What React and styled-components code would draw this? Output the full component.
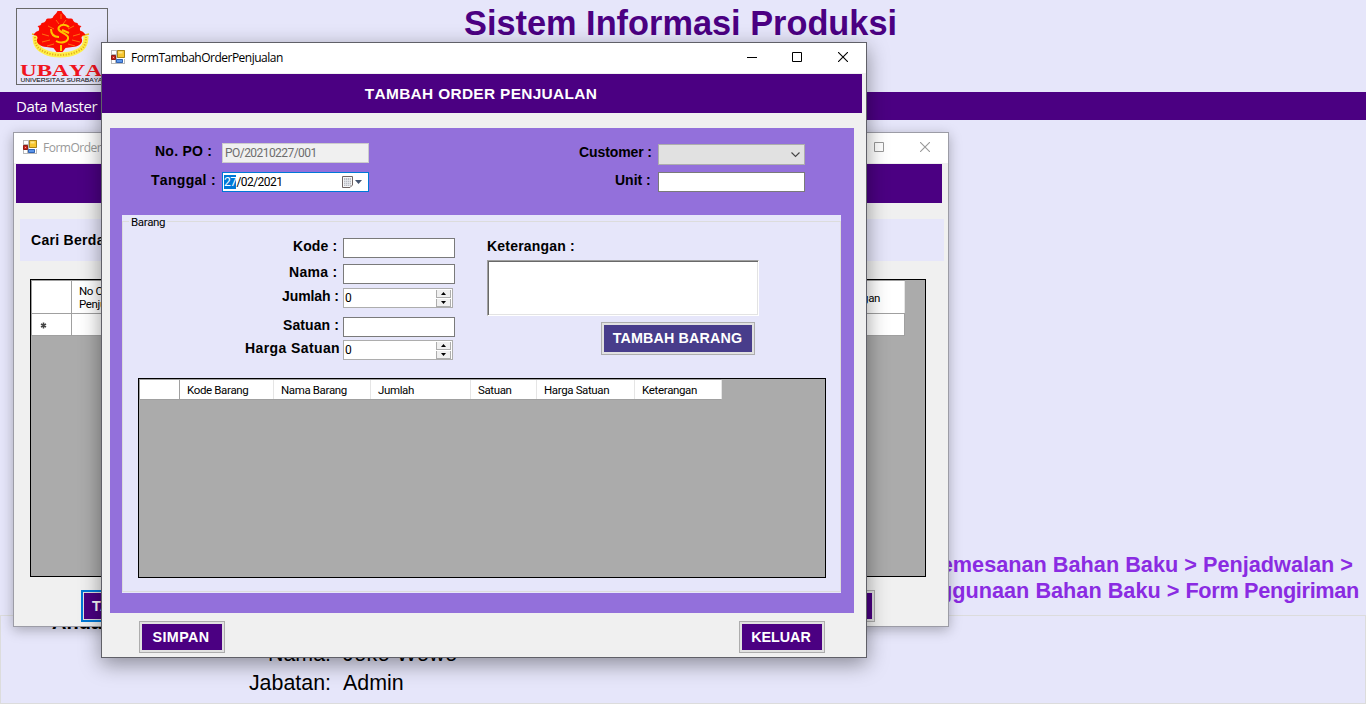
import React from 'react';
import styled, { createGlobalStyle, css } from 'styled-components';

const indigo = '#4b0082';
const lavender = '#e6e6fa';

const GlobalStyle = createGlobalStyle`
  *, *::before, *::after { box-sizing: border-box; }
  body { margin: 0; overflow: hidden; background: ${lavender}; font-family: "Liberation Sans", Arial, sans-serif; font-kerning: none; }
`;

const uiText = css`
  font-family: Roboto, "Open Sans", sans-serif;
  font-size: 11.5px;
  letter-spacing: -0.38px;
  white-space: nowrap;
`;

/* ---------- main screen ---------- */
const Screen = styled.div`
  position: relative;
  width: 1366px;
  height: 704px;
  overflow: hidden;
  display: flex;
  flex-direction: column;
  background: ${lavender};
`;
const Header = styled.header`
  height: 92px;
  padding: 8px 0 0 16px;
  display: flex;
  align-items: flex-start;
`;
const LogoBox = styled.div`
  width: 92px;
  height: 77px;
  border: 1px solid #696969;
  svg { display: block; }
`;
const AppTitle = styled.h1`
  margin: -5px 0 0 356px;
  color: ${indigo};
  font-size: 34.35px;
  line-height: 40px;
  white-space: nowrap;
`;
const MenuBar = styled.nav`
  height: 28px;
  padding-left: 16px;
  background: ${indigo};
  color: #fff;
  font: 15px/29px "Open Sans", "Noto Sans", sans-serif;
  letter-spacing: -0.4px;
`;
const FlowGuide = styled.div`
  flex: 1;
  padding: 432px 7px 0 0;
  display: flex;
  flex-direction: column;
  align-items: flex-end;
`;
const FlowLine = styled.div`
  margin-right: ${(p) => p.$end || 0}px;
  color: #8a2be2;
  font-weight: bold;
  font-size: 21.7px;
  line-height: 26px;
  white-space: nowrap;
`;
const FlowStep = styled.span`
  letter-spacing: -0.32px;
`;
const UserPanel = styled.section`
  height: 89px;
  border: 1px solid #dcdcdc;
  padding-left: 51px;
`;
const UserHeading = styled.div`
  font-size: 20px;
  font-weight: bold;
  line-height: 22px;
  margin-top: -5px;
`;
const UserRow = styled.div`
  display: flex;
  gap: 12px;
  margin-top: ${(p) => p.$top}px;
  font-size: 21.4px;
  line-height: 24px;
`;
const UserKey = styled.span`
  width: 279px;
  text-align: right;
`;
const UserValue = styled.span`
  letter-spacing: ${(p) => p.$ls || 0}px;
`;

/* ---------- windows ---------- */
const Window = styled.section`
  position: absolute;
  left: ${(p) => p.$x}px;
  top: ${(p) => p.$y}px;
  width: ${(p) => p.$w}px;
  height: ${(p) => p.$h}px;
  display: flex;
  flex-direction: column;
  background: #f0f0f0;
  border: 1px solid ${(p) => (p.$active ? '#606068' : '#9c9ca6')};
  box-shadow: ${(p) => (p.$active ? '0 6px 20px rgba(0,0,0,.4)' : '0 3px 12px rgba(0,0,0,.28)')};
`;
const TitleBar = styled.div`
  height: 30px;
  flex: none;
  padding: 0 18px 2px 9px;
  display: flex;
  align-items: center;
  background: #fff;
  color: ${(p) => (p.$active ? '#000' : '#999')};
`;
const TitleText = styled.span`
  flex: 1;
  margin-left: 6px;
  padding-top: 1px;
  font: 12px/28px "Open Sans", "Noto Sans", sans-serif;
  letter-spacing: -0.5px;
`;
const Controls = styled.div`
  display: flex;
  gap: 35px;
  svg { display: block; }
  svg:last-child { margin-left: 1px; }
`;
const Banner = styled.h2`
  flex: none;
  margin: 1px ${(p) => p.$right}px 0 ${(p) => p.$left || 0}px;
  height: 39px;
  background: ${indigo};
  color: #fff;
  text-align: center;
  text-indent: -2px;
  font-size: 15.4px;
  line-height: 39px;
  letter-spacing: 0.34px;
`;
const Button = styled.button`
  flex: none;
  width: ${(p) => p.$w}px;
  height: ${(p) => p.$h || 32}px;
  margin: ${(p) => p.$m || 0};
  padding: ${(p) => p.$pad || '0 2px 0 0'};
  border: ${(p) => (p.$focus ? '2px solid #0078d7' : '1px solid #adadad')};
  background: ${(p) => p.$bg || indigo};
  box-shadow: inset 0 0 0 ${(p) => (p.$focus ? 1 : 2)}px #e1e1e1;
  color: #fff;
  font: bold 14.3px/26px "Liberation Sans", Arial, sans-serif;
  letter-spacing: ${(p) => p.$ls}px;
  text-align: ${(p) => (p.$focus ? 'left' : 'center')};
  text-indent: ${(p) => (p.$focus ? 9 : 0)}px;
`;

/* ---------- order list window ---------- */
const SearchBar = styled.div`
  flex: none;
  margin: 16px 4px 0 6px;
  height: 42px;
  padding-left: 11px;
  background: ${lavender};
  font-weight: bold;
  font-size: 14px;
  line-height: 42px;
  letter-spacing: 0.3px;
`;
const DataGrid = styled.div`
  flex: none;
  width: ${(p) => p.$w}px;
  height: ${(p) => p.$h}px;
  margin: ${(p) => p.$m};
  border: 1px solid #000;
  background: #ababab;
`;
const GridRow = styled.div`
  display: flex;
  width: ${(p) => p.$w}px;
  height: ${(p) => p.$h}px;
  border-top: 1px solid #a0a0a0;
  border-left: 1px solid #a0a0a0;
  ${(p) => p.$last && 'border-bottom: 1px solid #a0a0a0;'}
`;
const GridCell = styled.div`
  ${uiText}
  flex: none;
  display: flex;
  align-items: center;
  width: ${(p) => p.$w}px;
  padding: 2px ${(p) => (p.$end ? 24 : 0)}px 0 7px;
  background: #fff;
  border-right: 1px solid ${(p) => (p.$dark ? '#a0a0a0' : '#e5e5e5')};
  line-height: 13px;
  justify-content: ${(p) => (p.$end ? 'flex-end' : 'flex-start')};
`;
const ListActions = styled.div`
  display: flex;
  justify-content: space-between;
  padding: 13px 73px 0 67px;
`;

/* ---------- new order window ---------- */
const OrderPanel = styled.div`
  flex: none;
  width: 744px;
  height: 485px;
  margin: 15px 0 0 8px;
  background: #9370db;
`;
const OrderHead = styled.div`
  height: 87px;
  padding: 15px 49px 0 41px;
  display: flex;
  justify-content: space-between;
`;
const Column = styled.div`
  display: flex;
  flex-direction: column;
  align-items: flex-end;
`;
const Field = styled.label`
  display: flex;
  align-items: flex-start;
  margin-top: ${(p) => p.$top || 0}px;
  padding-right: ${(p) => p.$right || 0}px;
`;
const Caption = styled.span`
  width: ${(p) => p.$w}px;
  font-weight: bold;
  font-size: 14px;
  line-height: 16px;
  letter-spacing: ${(p) => p.$ls || 0}px;
  white-space: pre;
`;
const Box = styled.span`
  ${uiText}
  display: flex;
  align-items: center;
  width: ${(p) => p.$w}px;
  height: ${(p) => p.$h || 20}px;
  padding-left: 1px;
  border: 1px solid ${(p) => p.$border || '#7a7a7a'};
  background: ${(p) => p.$bg || '#fff'};
  color: ${(p) => p.$color || '#000'};
  line-height: 16px;
  svg { flex: none; }
`;
const BoxText = styled.span`
  flex: 1;
  padding-left: ${(p) => p.$pad || 0}px;
  font-size: 12px;
  letter-spacing: -0.55px;
`;
const Trailing = styled.span`
  display: flex;
  margin-right: ${(p) => p.$gap}px;
`;
const Selected = styled.mark`
  display: inline-block;
  height: 14px;
  line-height: 14px;
  background: #0078d7;
  color: #fff;
`;
const SpinButtons = styled.span`
  display: flex;
  flex-direction: column;
  gap: 1px;
  width: 15px;
  height: 17px;
`;
const SpinButton = styled.span`
  flex: 1;
  display: flex;
  align-items: center;
  justify-content: center;
  background: #f0f0f0;
  border: solid #adadad;
  border-width: 0 1px 1px 1px;
`;
const Group = styled.div`
  width: 719px;
  height: 378px;
  margin-left: 12px;
  background: ${lavender};
`;
const GroupTitle = styled.div`
  ${uiText}
  display: flex;
  align-items: center;
  height: 13px;
  line-height: 13px;
  span { padding: 2px 2px 0; }
  &::before { content: ''; width: 7px; height: 1px; background: #dcdcdc; }
  &::after { content: ''; flex: 1; height: 1px; background: #dcdcdc; }
`;
const GroupBody = styled.div`
  height: 370px;
  margin-top: -6px;
  border: solid #dcdcdc;
  border-width: 0 1px 1px 1px;
`;
const ItemForm = styled.div`
  display: flex;
  padding: 16px 0 0 122px;
  height: 156px;
`;
const NoteColumn = styled.div`
  display: flex;
  flex-direction: column;
  width: 272px;
  margin-left: 32px;
`;
const NoteBox = styled.div`
  width: 272px;
  height: 56px;
  margin-top: 6px;
  background: #fff;
  border: 1px solid;
  border-color: #a0a0a0 #fff #fff #a0a0a0;
  box-shadow: inset 1px 1px 0 #696969, inset -1px -1px 0 #e3e3e3;
`;
const FooterBar = styled.div`
  display: flex;
  justify-content: space-between;
  padding: 8px 41px 0 37px;
`;

/* ---------- drawings ---------- */
const FormIcon = () => (
  <svg width="14" height="14" viewBox="0 0 14 14">
    <rect width="14" height="14" fill="#b9b9b9" />
    <path d="M1 1h4v3H1zM1 10h3v3H1z" fill="#fff" />
    <path d="M6.500.5h7v7h-7z" fill="#f8c62f" stroke="#a98416" />
    <path d="M7.500 1.500h4v2h-4z" fill="#fde58b" />
    <path d="M.5 5.500h4v4h-4z" fill="#c8261b" stroke="#8e1c14" />
    <path d="M2 7h1v1H2z" fill="#f3a79f" />
    <path d="M5.500 9.500h6v3h-6z" fill="#5b95ea" stroke="#2f62b5" />
    <path d="M6 8h8v1H6zM12 9h1v4h-1z" fill="#fff" />
  </svg>
);

const WindowControls = ({ color }) => (
  <Controls>
    <svg width="10" height="10" viewBox="0 0 10 10"><path d="M0 5.500h10" stroke={color} /></svg>
    <svg width="10" height="10" viewBox="0 0 10 10"><path d="M.5.5h9v9h-9z" fill="none" stroke={color} /></svg>
    <svg width="10" height="10" viewBox="0 0 10 10"><path d="M0 0l10 10M10 0l-10 10" stroke={color} strokeWidth="1.1" /></svg>
  </Controls>
);

const Logo = () => (
  <svg width="90" height="75" viewBox="0 0 90 75">
    <path d="M18 27c0 9 3 13 10 16 8 4 22 4 31 0 7-3 10-7 10-16" fill="none" stroke="#fff04a" strokeWidth="5" />
    <path d="M15 25l8 2M64 27l8-2" stroke="#edb91c" strokeWidth="1.500" />
    <path d="M18 28c0 9 3 12 10 15 8 4 22 4 31 0 7-3 10-6 10-15" fill="none" stroke="#e5ae1c" strokeWidth="2" strokeDasharray="1.200 1.500" />
    <path d="M43.500 2c1 3 4 4 5 7 3 1 4 0 6 1 1 3 3 4 5 4 0 2 2 3 4 3-2 2-2 3-1 5 2 0 4 2 5 4-3 0-4 1-4 3 1 2 1 4-1 6-2 2-5 3-8 3l-7 1-3 4h-3l-3 0-3-4-7-1c-3 0-6-1-8-3-2-2-2-4-1-6 0-2-1-3-4-3 1-2 3-4 5-4 1-2 1-3-1-5 2 0 4-1 4-3 2 0 4-1 5-4 2-1 3 0 6-1 1-3 4-4 5-7z" fill="#fa0b00" transform="translate(1 0)" />
    <path d="M44 5v5M39 11l3 4M49 11l-3 4M31 17l6 3M57 17l-6 3M25 25l7 2M63 25l-7 2M25 33l8-2M63 33l-8-2M30 37l7-2M58 37l-7-2" fill="none" stroke="#ff7a12" strokeWidth=".9" />
    <path d="M52 18c-3-3-8-3-10 0-3 5 8 6 9 10 1 5-7 7-12 4M34 20c0 5 3 8 8 8M45 21l7 3M44 36v6" fill="none" stroke="#ffc400" strokeWidth="2" />
    <text x="3" y="67" textLength="82" lengthAdjust="spacingAndGlyphs" fontFamily="Liberation Serif, serif" fontWeight="bold" fontSize="17" fill="#f01420">UBAYA</text>
    <text x="3.500" y="73" textLength="82" lengthAdjust="spacingAndGlyphs" fontFamily="Liberation Sans, sans-serif" fontSize="5.600" fill="#222" stroke="#222" strokeWidth=".1">UNIVERSITAS SURABAYA</text>
  </svg>
);

const CalendarIcon = () => (
  <svg width="21" height="13" viewBox="0 0 21 13">
    <path d="M.5.500h10v8.500l-2.500 2.500h-7.500z" fill="#f7f7f7" stroke="#6f6464" />
    <path d="M2 2h7v8H2z" fill="#b9bcc4" />
    <path d="M2 4.500h7M2 6.500h7M2 8.500h7M3.500 2v8M5.500 2v8M7.500 2v8" stroke="#e9eaee" strokeWidth=".7" />
    <path d="M13 4h7l-3.500 4z" fill="#44546f" />
  </svg>
);

const Chevron = () => (
  <svg width="9" height="6" viewBox="0 0 9 6">
    <path d="M.5.500l4 4 4-4" fill="none" stroke="#444" strokeWidth="1.1" />
  </svg>
);

const Spinner = () => (
  <SpinButtons>
    <SpinButton><svg width="5" height="3" viewBox="0 0 5 3"><path d="M0 3l2.500-3L5 3z" /></svg></SpinButton>
    <SpinButton><svg width="5" height="3" viewBox="0 0 5 3"><path d="M0 0l2.500 3L5 0z" /></svg></SpinButton>
  </SpinButtons>
);

const NumberField = ({ top, caption, w, ls }) => (
  <Field $top={top} $right={2}>
    <Caption $w={w} $ls={ls}>{caption}</Caption>
    <Box $w={110} $border="#adadad"><BoxText>0</BoxText><Trailing $gap={1}><Spinner /></Trailing></Box>
  </Field>
);

const TextField = ({ top, caption, w, ls, box = 112 }) => (
  <Field $top={top}>
    <Caption $w={w} $ls={ls}>{caption}</Caption>
    <Box $w={box} />
  </Field>
);

const columns = [
  ['Kode Barang', 94],
  ['Nama Barang', 97],
  ['Jumlah', 100],
  ['Satuan', 66],
  ['Harga Satuan', 98],
  ['Keterangan', 87],
];

const OrderListWindow = () => (
  <Window $x={13} $y={132} $w={936} $h={495}>
    <TitleBar>
      <FormIcon />
      <TitleText>FormOrderPenjualan</TitleText>
      <WindowControls color="#999" />
    </TitleBar>
    <Banner $left={2} $right={6} />
    <SearchBar>Cari Berdasarkan</SearchBar>
    <DataGrid $w={896} $h={298} $m="18px 0 0 16px">
      <GridRow $w={874} $h={33}>
        <GridCell $w={40} $dark />
        <GridCell $w={100} $dark>No Order<br />Penjualan</GridCell>
        <GridCell $w={733} $end>Keterangan</GridCell>
      </GridRow>
      <GridRow $w={874} $h={23} $last>
        <GridCell $w={40} $dark>
          <svg width="9" height="9" viewBox="0 0 9 9"><path d="M4.500 1.500v6M2 3l5 3M7 3L2 6" stroke="#444" strokeWidth="1.500" /></svg>
        </GridCell>
        <GridCell $w={833} $dark />
      </GridRow>
    </DataGrid>
    <ListActions>
      <Button $w={100} $focus $ls={0.4}>TAMBAH</Button>
      <Button $w={86} $ls={0}>KELUAR</Button>
    </ListActions>
  </Window>
);

const NewOrderWindow = () => (
  <Window $x={101} $y={42} $w={766} $h={616} $active>
    <TitleBar $active>
      <FormIcon />
      <TitleText>FormTambahOrderPenjualan</TitleText>
      <WindowControls color="#000" />
    </TitleBar>
    <Banner $right={4}>TAMBAH ORDER PENJUALAN</Banner>
    <OrderPanel>
      <OrderHead>
        <Column>
          <Field>
            <Caption $w={67} $ls={0.25}>No. PO :</Caption>
            <Box $w={147} $bg="#f0f0f0" $border="#ccc" $color="#6d6d6d"><BoxText $pad={1}>PO/20210227/001</BoxText></Box>
          </Field>
          <Field $top={9}>
            <Caption $w={71} $ls={0.3}>Tanggal :</Caption>
            <Box $w={147} $border="#0078d7">
              <BoxText><Selected>27</Selected>/02/2021</BoxText>
              <Trailing $gap={5}><CalendarIcon /></Trailing>
            </Box>
          </Field>
        </Column>
        <Column>
          <Field $top={1}>
            <Caption $w={79} $ls={-0.1}>Customer :</Caption>
            <Box $w={147} $h={21} $bg="#e1e1e1" $border="#adadad"><BoxText /><Trailing $gap={4}><Chevron /></Trailing></Box>
          </Field>
          <TextField top={7} caption="Unit :" w={43} box={147} />
        </Column>
      </OrderHead>
      <Group>
        <GroupTitle><span>Barang</span></GroupTitle>
        <GroupBody>
          <ItemForm>
            <Column>
              <TextField caption="Kode :" w={50} ls={0.1} />
              <TextField top={6} caption="Nama :" w={54} ls={0.3} />
              <NumberField top={4} caption="Jumlah :" w={61} ls={-0.1} />
              <TextField top={9} caption="Satuan :" w={60} ls={0.1} />
              <NumberField top={3} caption="Harga Satuan" w={98} ls={0.4} />
            </Column>
            <NoteColumn>
              <Caption $ls={0.2}>Keterangan :</Caption>
              <NoteBox />
              <Button $w={154} $h={33} $m="6px 0 0 114px" $pad="0 1px 2px 0" $bg="#483d8b" $ls={0.15}>TAMBAH BARANG</Button>
            </NoteColumn>
          </ItemForm>
          <DataGrid $w={688} $h={200} $m="0 0 0 15px">
            <GridRow $w={582} $h={21} $last>
              <GridCell $w={40} $dark />
              {columns.map(([name, w]) => <GridCell key={name} $w={w}>{name}</GridCell>)}
            </GridRow>
          </DataGrid>
        </GroupBody>
      </Group>
    </OrderPanel>
    <FooterBar>
      <Button $w={86} $ls={0.4}>SIMPAN</Button>
      <Button $w={86} $ls={0}>KELUAR</Button>
    </FooterBar>
  </Window>
);

export default function App() {
  return (
    <Screen>
      <GlobalStyle />
      <Header>
        <LogoBox><Logo /></LogoBox>
        <AppTitle>Sistem Informasi Produksi</AppTitle>
      </Header>
      <MenuBar>Data Master</MenuBar>
      <FlowGuide>
        <FlowLine $end={6}>Pemesanan Bahan Baku &gt; Penjadwalan &gt;</FlowLine>
        <FlowLine>Penggunaan Bahan Baku &gt; <FlowStep>Form Pengiriman</FlowStep></FlowLine>
      </FlowGuide>
      <UserPanel>
        <UserHeading>Anda</UserHeading>
        <UserRow $top={9}><UserKey>Nama:</UserKey><UserValue $ls={0.45}>Joko Wowo</UserValue></UserRow>
        <UserRow $top={5}><UserKey>Jabatan:</UserKey><UserValue>Admin</UserValue></UserRow>
      </UserPanel>
      <OrderListWindow />
      <NewOrderWindow />
    </Screen>
  );
}
